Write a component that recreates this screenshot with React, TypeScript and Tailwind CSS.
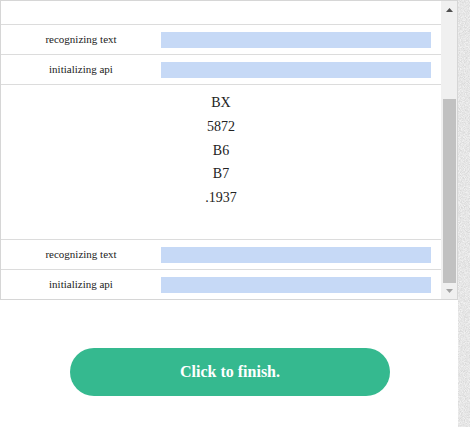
import React from "react";

const serif = "[font-family:'Liberation_Serif','Times_New_Roman',serif]";

function Row({ label }: { label: string }) {
  return (
    <div className="flex h-[30px] items-center border-t border-[#dcdcdc]">
      <div className={`w-[160px] text-center text-[11px] text-[#222] ${serif}`}>
        {label}
      </div>
      <div className="h-[16px] w-[270px] bg-[#c6d9f6]" />
    </div>
  );
}

export default function App() {
  return (
    <div className={`relative flex h-[427px] w-[470px] bg-white ${serif}`}>
      <div className="w-[458px]">
        <div className="flex h-[300px] border border-[#d6d6d6]">
          <div className="flex w-[440px] flex-col">
            <div className="h-[23px]" />
            <Row label="recognizing text" />
            <Row label="initializing api" />
            <div className={`flex h-[155px] flex-col items-center border-t border-[#dcdcdc] pt-[6px] text-[14px] leading-[23.8px] text-[#222] ${serif}`}>
              <div>BX</div>
              <div>5872</div>
              <div>B6</div>
              <div>B7</div>
              <div>.1937</div>
            </div>
            <Row label="recognizing text" />
            <Row label="initializing api" />
          </div>
          <div className="flex w-[16px] flex-col items-center bg-[#f0f0f0]">
            <div className="flex h-[17px] w-full items-center justify-center">
              <svg width="7" height="4" viewBox="0 0 7 4">
                <path d="M0 4 L3.5 0 L7 4 Z" fill="#505050" />
              </svg>
            </div>
            <div className="mt-[81px] h-[184px] w-[13px] bg-[#c1c1c1]" />
            <div className="flex h-[15px] w-full items-center justify-center">
              <svg width="7" height="4" viewBox="0 0 7 4">
                <path d="M0 0 L3.5 4 L7 0 Z" fill="#a3a3a3" />
              </svg>
            </div>
          </div>
        </div>
        <div className="mt-[48px] flex justify-center pl-[2px]">
          <button className={`h-[48px] w-[320px] rounded-full bg-[#35b98f] text-[16px] font-bold text-white ${serif}`}>
            Click to finish.
          </button>
        </div>
      </div>
      <div className="h-full w-[12px]">
        <svg width="12" height="427">
          <filter id="n">
            <feTurbulence type="fractalNoise" baseFrequency="1.2" numOctaves="2" seed="3" />
            <feColorMatrix
              type="matrix"
              values="0 0 0 0 0.6  0 0 0 0 0.6  0 0 0 0 0.6  0 0 0 -1.6 1.3"
            />
          </filter>
          <rect width="12" height="427" fill="#f4f4f4" />
          <rect width="12" height="427" filter="url(#n)" opacity="0.7" />
        </svg>
      </div>
    </div>
  );
}
